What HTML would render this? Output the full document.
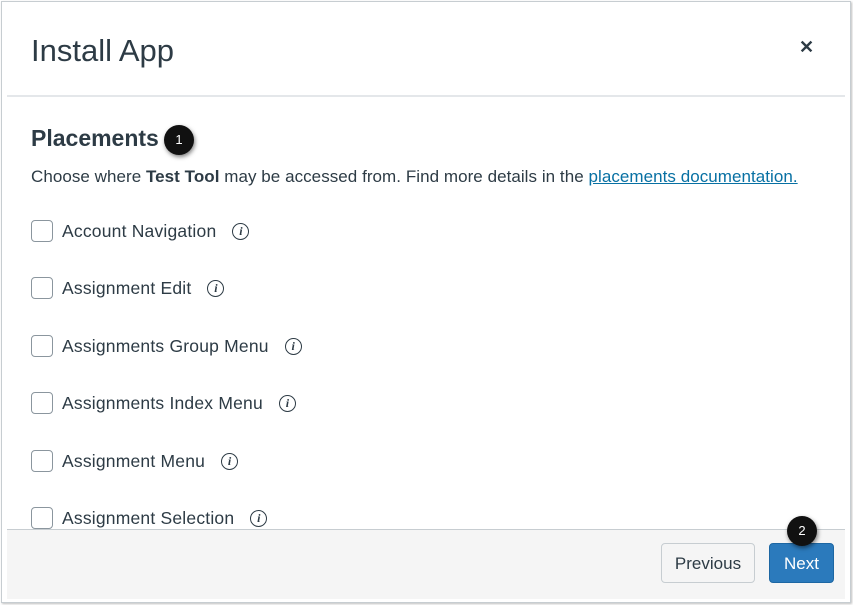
<!DOCTYPE html>
<html><head><style>
body{margin:0;width:853px;height:605px;background:#fff;font-family:"Liberation Sans",sans-serif;color:#2d3b45;position:relative;overflow:hidden}
.frame{position:absolute;left:1px;top:1px;width:848px;height:600px;border:1px solid #c7cdd1;box-shadow:1px 1px 2px rgba(0,0,0,.25)}
.t{position:absolute;left:31px;top:33px;font-size:31px;color:#2d3b45}
.x{position:absolute;left:799px;top:37px;font-size:18px;font-weight:bold}
.sep{position:absolute;left:7px;top:95px;width:838px;height:2px;background:#e4e7ea}
h2{position:absolute;left:31px;top:125px;margin:0;font-size:23px;font-weight:bold}
.badge{position:absolute;width:30px;height:30px;border-radius:50%;background:#111;color:#fff;font-size:13px;text-align:center;line-height:30px;box-shadow:1px 2px 4px rgba(0,0,0,.5)}
.d{position:absolute;left:31px;top:167px;font-size:17px;letter-spacing:0.05px}
.d a{color:#0770a3;text-decoration:underline}
.row{position:absolute;left:31px;font-size:17.5px;display:flex;align-items:center;letter-spacing:0.2px}
.cb{width:22px;height:22px;border:1px solid #8b969e;border-radius:4px;margin-right:9px;box-sizing:border-box}
.i{display:inline-block;width:15px;height:15px;border:1.5px solid #2d3b45;border-radius:50%;font-family:"Liberation Serif",serif;font-style:italic;font-weight:bold;font-size:12px;text-align:center;line-height:15px;margin-left:16px;letter-spacing:0}
.foot{position:absolute;left:7px;top:529px;width:838px;height:69px;background:#f5f5f5;border-top:1px solid #c7cdd1}
.btn{position:absolute;top:543px;height:40px;border-radius:4px;font-size:17px;line-height:40px;text-align:center;box-sizing:border-box}
</style></head><body>
<div class="frame"></div>
<div class="t">Install App</div>
<div class="x">✕</div>
<div class="sep"></div>
<h2>Placements</h2>
<div class="badge" style="left:164px;top:125px">1</div>
<div class="d">Choose where <b>Test Tool</b> may be accessed from. Find more details in the <a>placements documentation.</a></div>
<div class="row" style="top:220px"><div class="cb"></div>Account Navigation<span class="i">i</span></div>
<div class="row" style="top:277px"><div class="cb"></div>Assignment Edit<span class="i">i</span></div>
<div class="row" style="top:335px"><div class="cb"></div>Assignments Group Menu<span class="i">i</span></div>
<div class="row" style="top:392px"><div class="cb"></div>Assignments Index Menu<span class="i">i</span></div>
<div class="row" style="top:450px"><div class="cb"></div>Assignment Menu<span class="i">i</span></div>
<div class="row" style="top:507px"><div class="cb"></div>Assignment Selection<span class="i">i</span></div>
<div class="foot"></div>
<div class="btn" style="left:661px;width:94px;background:#f5f5f5;border:1px solid #c7cdd1;color:#2d3b45">Previous</div>
<div class="btn" style="left:769px;width:65px;background:#2b7abc;border:1px solid #1d67a3;color:#fff">Next</div>
<div class="badge" style="left:787px;top:516px">2</div>
</body></html>
